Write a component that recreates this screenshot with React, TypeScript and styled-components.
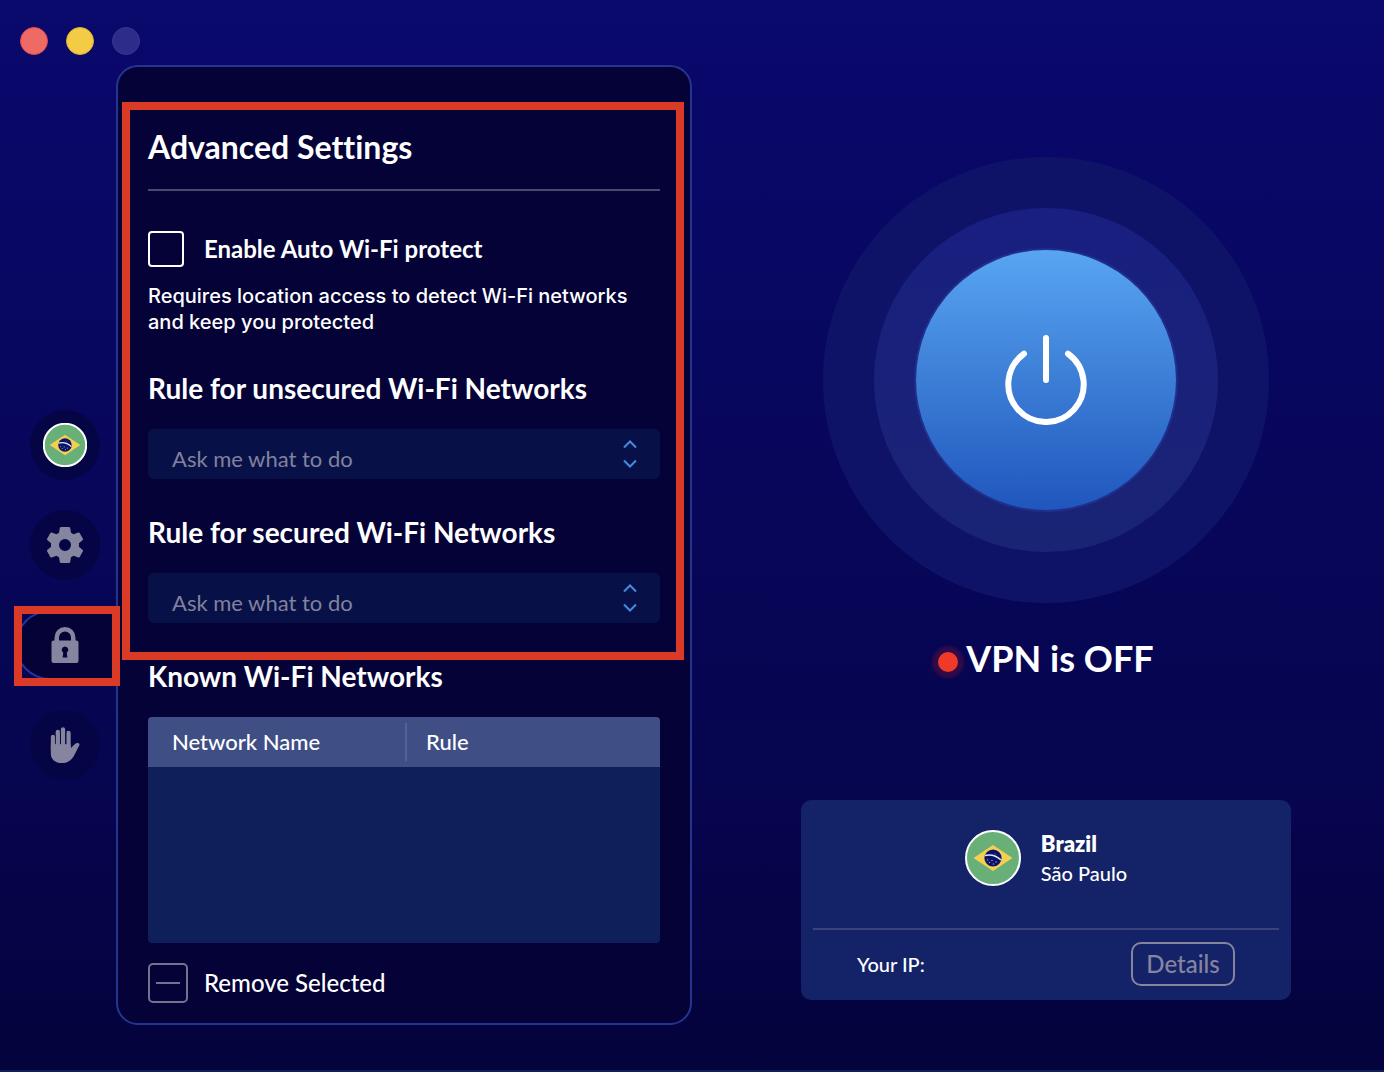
import React from "react";
import styled, { createGlobalStyle, css } from "styled-components";

const GlobalStyle = createGlobalStyle`
  *, *::before, *::after { box-sizing: border-box; }
  body {
    margin: 0;
    background: #050340;
    color: #ffffff;
    font-family: Lato, "Open Sans", sans-serif;
    font-variant-ligatures: none;
  }
  button, input, select { font: inherit; color: inherit; }
  h1, h2, p { margin: 0; }
`;

const AppWindow = styled.div`
  display: grid;
  grid-template-columns: 116px minmax(0, 576px) minmax(0, 1fr);
  grid-template-rows: 65px auto;
  min-height: 100vh;
  background: linear-gradient(#0a096c 0%, #09086a 8%, #070658 50%, #06054e 75%, #04033c 100%);
  border-bottom: 2px solid #0f1f5a;
`;

const TitleBar = styled.header`
  grid-column: 1 / 3;
  display: flex;
  gap: 18px;
  padding: 27px 20px 0;
`;

const WindowDot = styled.button<{ $fill: string; $edge: string }>`
  width: 28px;
  height: 28px;
  padding: 0;
  border: 1px solid ${(p) => p.$edge};
  border-radius: 50%;
  background: ${(p) => p.$fill};
`;

const Sidebar = styled.nav`
  grid-column: 1;
  grid-row: 2;
  display: flex;
  flex-direction: column;
  gap: 30px;
  padding-top: 345px;
`;

const NavItem = styled.div`
  position: relative;
  z-index: 1;
  height: 70px;
`;

const NavButton = styled.button<{ $active?: boolean }>`
  display: flex;
  align-items: center;
  justify-content: center;
  width: 70px;
  height: 70px;
  margin-left: 30px;
  padding: 0;
  border: 0;
  border-radius: 50%;
  background: #050445;
  color: #86859f;
  ${(p) =>
    p.$active &&
    css`
      width: 103px;
      margin-left: 15px;
      padding-right: 6px;
      border: 2px solid #27349a;
      border-right: 0;
      border-radius: 35px 0 0 35px;
      background: #040236;
    `}
`;

const Highlight = styled.span<{ $inset: string }>`
  position: absolute;
  inset: ${(p) => p.$inset};
  z-index: 2;
  border: 8px solid #db3a27;
  pointer-events: none;
`;

const Panel = styled.main`
  grid-column: 2;
  grid-row: 2;
  align-self: start;
  padding: 60px 30px 20px;
  border: 2px solid #25348f;
  border-radius: 22px;
  background: #040236;
`;

const RuleSettings = styled.section`
  position: relative;
`;

const Title = styled.h1`
  padding-bottom: 22px;
  border-bottom: 2px solid #4a4970;
  font-size: 32px;
  line-height: 40px;
  font-weight: 700;
`;

const CheckRow = styled.label`
  display: flex;
  align-items: center;
  gap: 20px;
  margin-top: 40px;
  font-size: 24px;
  line-height: 36px;
  font-weight: 700;
`;

const CheckBox = styled.input`
  appearance: none;
  width: 36px;
  height: 36px;
  margin: 0;
  border: 2px solid #ffffff;
  border-radius: 4px;
  &:checked { background: #3f82dc; }
`;

const Hint = styled.p`
  margin-top: 16px;
  font-family: Inter, Roboto, sans-serif;
  font-size: 20px;
  line-height: 26px;
  font-weight: 500;
`;

const Heading = styled.h2`
  margin-top: 36px;
  margin-bottom: 24px;
  font-size: 28px;
  line-height: 34px;
  font-weight: 700;
`;

const SelectBox = styled.div`
  position: relative;
  color: #468ae4;
`;

const Select = styled.select`
  display: block;
  appearance: none;
  width: 100%;
  height: 50px;
  padding: 8px 60px 0 24px;
  border: 0;
  border-radius: 6px;
  background: #081147;
  color: #80829f;
  opacity: 1;
  font-size: 22px;
`;

const SelectArrows = styled.svg`
  position: absolute;
  top: 10px;
  right: 22px;
  pointer-events: none;
`;

const TableBox = styled.div`
  min-height: 226px;
  overflow: hidden;
  border-radius: 4px;
  background: #0f1f5a;
`;

const Table = styled.table`
  width: 100%;
  border-collapse: collapse;
  table-layout: fixed;
  background: #3f4f86;
  font-size: 22px;
`;

const Column = styled.th<{ $width?: string; $indent: number; $divided?: boolean }>`
  width: ${(p) => p.$width ?? "auto"};
  padding: 6px 0;
  text-align: left;
  font-weight: 500;
  span {
    display: block;
    padding-left: ${(p) => p.$indent}px;
    border-right: ${(p) => (p.$divided ? "2px solid #53629a" : "0")};
    line-height: 38px;
  }
`;

const RemoveButton = styled.button`
  display: flex;
  align-items: center;
  gap: 16px;
  margin-top: 20px;
  padding: 0;
  border: 0;
  background: none;
  font-size: 24px;
  line-height: 40px;
  font-weight: 500;
`;

const MinusBox = styled.span`
  display: grid;
  place-items: center;
  width: 40px;
  height: 40px;
  border: 2px solid #74738f;
  border-radius: 5px;
  &::before {
    content: "";
    width: 24px;
    height: 2px;
    background: #74738f;
  }
`;

const Status = styled.aside`
  grid-column: 3;
  grid-row: 1 / 3;
  display: flex;
  flex-direction: column;
  align-items: center;
  padding: 157px 20px 40px 36px;
`;

const OuterRing = styled.div`
  display: grid;
  place-items: center;
  width: 446px;
  height: 446px;
  border-radius: 50%;
  background: #0f1368;
`;

const InnerRing = styled.div`
  display: grid;
  place-items: center;
  width: 344px;
  height: 344px;
  border-radius: 50%;
  background: linear-gradient(#181f80, #1a2474);
`;

const PowerButton = styled.button`
  display: grid;
  place-items: center;
  width: 260px;
  height: 260px;
  padding: 0;
  border: 0;
  border-radius: 50%;
  background: linear-gradient(#58a5f3, #3f82d9 45%, #2056bd);
  box-shadow: 0 0 0 2px #202f8c;
`;

const StatusLine = styled.p`
  display: flex;
  align-items: center;
  gap: 8px;
  margin-top: 34px;
  font-size: 36px;
  line-height: 42px;
  font-weight: 700;
`;

const StatusDot = styled.span`
  width: 20px;
  height: 20px;
  margin-top: 8px;
  border-radius: 50%;
  background: #ef3a29;
  box-shadow: 0 0 3px 6px rgba(150, 24, 50, 0.3);
`;

const Card = styled.section`
  width: 100%;
  max-width: 490px;
  margin-top: 121px;
  padding: 30px 12px 14px;
  border-radius: 10px;
  background: #142268;
`;

const Location = styled.div`
  display: flex;
  justify-content: center;
  gap: 20px;
  padding-bottom: 40px;
  border-bottom: 2px solid #3b437f;
`;

const Place = styled.div`
  font-size: 20px;
  line-height: 30px;
  font-weight: 500;
  strong {
    display: block;
    font-size: 22px;
    line-height: 28px;
    font-weight: 800;
  }
`;

const IpRow = styled.div`
  display: flex;
  align-items: center;
  justify-content: space-between;
  padding: 12px 44px 0;
  font-size: 20px;
  font-weight: 500;
`;

const DetailsButton = styled.button`
  width: 104px;
  height: 44px;
  padding: 0;
  border: 2px solid #85859f;
  border-radius: 10px;
  background: none;
  color: #85859f;
  font-size: 24px;
  line-height: 40px;
  font-weight: 500;
`;

const BrazilFlag = ({ size }: { size: number }) => (
  <svg width={size} height={size} viewBox="0 0 56 56" aria-hidden="true">
    <circle cx="28" cy="28" r="27" fill="#69b078" stroke="#fff" strokeWidth={112 / size} />
    <path d="M8.500 28 28 15 47.500 28 28 41Z" fill="#f3d04f" />
    <circle cx="28" cy="28" r="8.600" fill="#0a1168" />
    <path d="M20 25.500q9-2 16 4.500" fill="none" stroke="#dfe6f3" strokeWidth="1.600" />
    <g fill="#7e93bd">
      <circle cx="22.500" cy="30" r=".8" />
      <circle cx="24.500" cy="32.500" r=".8" />
      <circle cx="27" cy="30.500" r=".8" />
      <circle cx="28.500" cy="34" r=".8" />
      <circle cx="31" cy="32" r=".8" />
      <circle cx="30" cy="24" r=".6" />
    </g>
  </svg>
);

const GearIcon = () => (
  <svg width="36" height="36" viewBox="0 0 36 36" fill="currentColor" aria-hidden="true">
    <path
      fillRule="evenodd"
      d="M14 0h8q1 0 1.200 1l.8 4.700 2.600 1.500 4.600-1.700q1-.3 1.500.6l3.200 5.700q.4.900-.4 1.500l-3.600 3q.2 1.700 0 3.400l3.600 3q.8.600.4 1.500l-3.200 5.700q-.5.900-1.500.6l-4.600-1.700-2.600 1.500-.8 4.700q-.2 1-1.200 1h-8q-1 0-1.200-1l-.8-4.700-2.600-1.500-4.600 1.700q-1 .3-1.500-.6l-3.200-5.700q-.4-.9.400-1.500l3.600-3q-.2-1.700 0-3.400l-3.600-3q-.8-.6-.4-1.500l3.200-5.700q.5-.9 1.500-.6l4.600 1.700 2.600-1.500.8-4.700q.2-1 1.200-1ZM18 12a6 6 0 1 0 0 12 6 6 0 0 0 0-12Z"
    />
  </svg>
);

const LockIcon = () => (
  <svg width="28" height="36" viewBox="0 0 28 36" fill="currentColor" aria-hidden="true">
    <path
      fillRule="evenodd"
      d="M3.500 13.500V10.500a10.500 10.500 0 0 1 21 0v3h1q2 0 2 2V34q0 2-2 2h-23q-2 0-2-2V15.500q0-2 2-2ZM8 13.500h12V10.500a6 6 0 0 0-12 0ZM14 19.500a3.400 3.400 0 0 0-1.700 6.300L11.600 30.500h4.800l-.7-4.700A3.400 3.400 0 0 0 14 19.500Z"
    />
  </svg>
);

const HandIcon = () => (
  <svg width="30" height="36" viewBox="0 0 90 108" fill="none" aria-hidden="true">
    <g stroke="currentColor" strokeWidth="13" strokeLinecap="round">
      <path d="M9 30v40M23.500 15v50M39 7v55M55.500 18v50" />
    </g>
    <path
      fill="currentColor"
      d="M2.500 52H62v12l13-13c6-6 16-3 13 4L72 86C63 101 52 108 36 108 15 108 2.500 96 2.500 80Z"
    />
    <g stroke="#050445" strokeWidth="2">
      <path d="M16.300 24v26M31.300 14v36M47.300 16v34" />
    </g>
  </svg>
);

const RulePicker = ({ id, title }: { id: string; title: string }) => (
  <>
    <Heading>
      <label htmlFor={id}>{title}</label>
    </Heading>
    <SelectBox>
      <Select id={id} disabled>
        <option>Ask me what to do</option>
      </Select>
      <SelectArrows width="16" height="30" viewBox="0 0 16 30" fill="none" stroke="currentColor" strokeWidth="2" aria-hidden="true">
        <path d="M2 8.500 8 2.500l6 6M2 21.500l6 6 6-6" />
      </SelectArrows>
    </SelectBox>
  </>
);

export default function App() {
  return (
    <>
      <GlobalStyle />
      <AppWindow>
        <TitleBar>
          <WindowDot $fill="#ee6a65" $edge="#df4a50" aria-label="Close" />
          <WindowDot $fill="#f3cb45" $edge="#dcae30" aria-label="Minimize" />
          <WindowDot $fill="#2e2c8a" $edge="#39378f" aria-label="Zoom" disabled />
        </TitleBar>

        <Sidebar aria-label="Sections">
          <NavItem>
            <NavButton aria-label="Locations">
              <BrazilFlag size={44} />
            </NavButton>
          </NavItem>
          <NavItem>
            <NavButton aria-label="Settings">
              <GearIcon />
            </NavButton>
          </NavItem>
          <NavItem>
            <NavButton $active aria-label="Wi-Fi protection" aria-current="page">
              <LockIcon />
            </NavButton>
            <Highlight $inset="-4px -4px -6px 14px" />
          </NavItem>
          <NavItem>
            <NavButton aria-label="Blocker">
              <HandIcon />
            </NavButton>
          </NavItem>
        </Sidebar>

        <Panel>
          <RuleSettings>
            <Title>Advanced Settings</Title>
            <CheckRow>
              <CheckBox type="checkbox" />
              Enable Auto Wi-Fi protect
            </CheckRow>
            <Hint>Requires location access to detect Wi-Fi networks and keep you protected</Hint>
            <RulePicker id="unsecured" title="Rule for unsecured Wi-Fi Networks" />
            <RulePicker id="secured" title="Rule for secured Wi-Fi Networks" />
            <Highlight $inset="-25px -24px -37px -26px" />
          </RuleSettings>

          <Heading>Known Wi-Fi Networks</Heading>
          <TableBox>
            <Table>
              <thead>
                <tr>
                  <Column $width="259px" $indent={24} $divided>
                    <span>Network Name</span>
                  </Column>
                  <Column $indent={19}>
                    <span>Rule</span>
                  </Column>
                </tr>
              </thead>
              <tbody />
            </Table>
          </TableBox>
          <RemoveButton>
            <MinusBox />
            Remove Selected
          </RemoveButton>
        </Panel>

        <Status>
          <OuterRing>
            <InnerRing>
              <PowerButton aria-label="Turn VPN on">
                <svg width="90" height="90" viewBox="0 0 90 90" fill="none" stroke="#fff" strokeWidth="6" strokeLinecap="round" aria-hidden="true">
                  <path d="M45 3v42M23 18.700a37.700 37.700 0 1 0 44 0" />
                </svg>
              </PowerButton>
            </InnerRing>
          </OuterRing>
          <StatusLine>
            <StatusDot />
            VPN is OFF
          </StatusLine>
          <Card>
            <Location>
              <BrazilFlag size={56} />
              <Place>
                <strong>Brazil</strong>
                São Paulo
              </Place>
            </Location>
            <IpRow>
              <span>Your IP:</span>
              <DetailsButton>Details</DetailsButton>
            </IpRow>
          </Card>
        </Status>
      </AppWindow>
    </>
  );
}
